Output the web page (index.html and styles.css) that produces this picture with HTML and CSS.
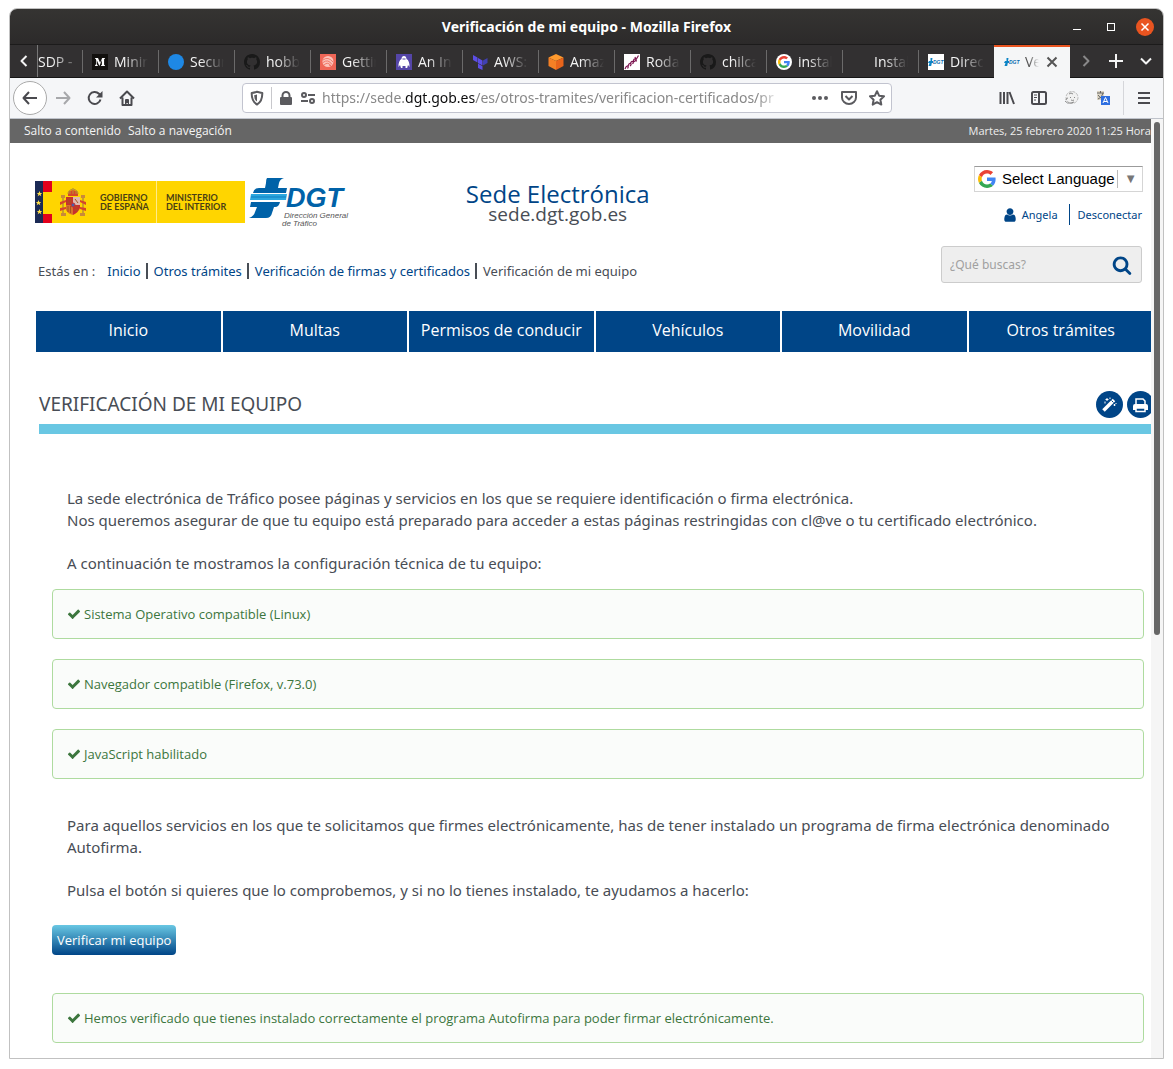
FILE: index.html
```html
<!DOCTYPE html>
<html lang="es">
<head>
<meta charset="utf-8">
<meta name="viewport" content="width=device-width, initial-scale=1">
<title>Verificación de mi equipo</title>
<link rel="stylesheet" href="styles.css">
</head>
<body>
<svg class="defs" aria-hidden="true">
  <symbol id="check" viewBox="0 0 1792 1792"><path d="M1671 566q0 40-28 68l-724 724-136 136q-28 28-68 28t-68-28l-136-136-362-362q-28-28-28-68t28-68l136-136q28-28 68-28t68 28l294 295 656-657q28-28 68-28t68 28l136 136q28 28 28 68z"/></symbol>
  <symbol id="google" viewBox="0 0 48 48"><path fill="#ea4335" d="M24 9.500c3.540 0 6.710 1.220 9.210 3.600l6.850-6.850C35.900 2.380 30.470 0 24 0 14.620 0 6.510 5.380 2.560 13.220l7.980 6.190C12.430 13.720 17.740 9.500 24 9.500z"/><path fill="#4285f4" d="M46.980 24.550c0-1.570-.15-3.090-.38-4.550H24v9.020h12.940c-.58 2.960-2.260 5.480-4.780 7.180l7.730 6c4.510-4.180 7.090-10.360 7.090-17.650z"/><path fill="#fbbc05" d="M10.530 28.590c-.48-1.450-.76-2.990-.76-4.590s.27-3.140.76-4.590l-7.980-6.190C.92 16.460 0 20.120 0 24c0 3.880.92 7.540 2.560 10.780l7.970-6.190z"/><path fill="#34a853" d="M24 48c6.480 0 11.930-2.130 15.890-5.810l-7.730-6c-2.150 1.450-4.920 2.300-8.160 2.300-6.260 0-11.570-4.220-13.470-9.910l-7.980 6.190C6.510 42.620 14.620 48 24 48z"/></symbol>
  <symbol id="github" viewBox="0 0 16 16"><path d="M8 0C3.580 0 0 3.580 0 8c0 3.540 2.290 6.530 5.470 7.590.4.070.55-.17.55-.38 0-.19-.01-.82-.01-1.490-2.010.37-2.530-.49-2.690-.94-.09-.23-.48-.94-.82-1.130-.28-.15-.68-.52-.01-.53.63-.01 1.080.58 1.230.82.72 1.210 1.870.87 2.330.66.070-.52.280-.87.510-1.070-1.780-.2-3.640-.89-3.640-3.950 0-.87.310-1.590.820-2.150-.08-.2-.36-1.020.080-2.120 0 0 .67-.21 2.200.82.640-.18 1.320-.27 2-.27s1.360.09 2 .27c1.530-1.040 2.200-.82 2.200-.82.440 1.100.160 1.920.080 2.120.510.560.820 1.270.820 2.150 0 3.070-1.870 3.750-3.650 3.950.290.250.540.730.540 1.480 0 1.070-.01 1.930-.01 2.200 0 .210.150.460.550.380A8.010 8.010 0 0 0 16 8c0-4.420-3.580-8-8-8z"/></symbol>
  <symbol id="dgt" viewBox="0 0 16 16"><path fill="#0b84c6" d="M1 7h1.500V4H4.500L4 7H5v2H3.800l-.6 3H.5L1.500 9H0z"/><text x="5" y="10" class="mini-dgt">DGT</text></symbol>
</svg>

<div class="window">
  <div class="titlebar">
    <span class="window-title">Verificación de mi equipo - Mozilla Firefox</span>
    <div class="window-buttons">
      <button type="button" aria-label="Minimizar"><svg width="18" height="18" viewBox="0 0 18 18"><path d="M5 11.500h8" stroke="#fff"/></svg></button>
      <button type="button" aria-label="Maximizar"><svg width="18" height="18" viewBox="0 0 18 18"><rect x="5.500" y="5.500" width="7" height="7" fill="none" stroke="#fff"/></svg></button>
      <button type="button" aria-label="Cerrar"><svg width="18" height="18" viewBox="0 0 18 18"><circle cx="9" cy="9" r="9" fill="#e95420"/><path d="M5.500 5.500l7 7m0-7l-7 7" stroke="#fff" stroke-width="1.500"/></svg></button>
    </div>
  </div>

  <div class="tabbar">
    <button type="button" class="scroll-left" aria-label="Pestañas anteriores"><svg width="16" height="16" viewBox="0 0 16 16"><path d="M10.500 3L5.500 8l5 5" class="line"/></svg></button>
    <div class="tabs">
      <button type="button" class="tab tab-first"><span>SDP - </span></button>
      <button type="button" class="tab"><svg viewBox="0 0 16 16"><rect width="16" height="16" fill="#12100e"/><path fill="#fff" d="M3 4h3l2.100 4.800L10.200 4H13v.6l-.9.700v5.400l.9.700v.6H9v-.6l.9-.7V6L7.400 12 4.700 6v4.300l1.100 1.100v.6H3v-.6l1-1.100V5.300L3 4.500z"/></svg><span>Mining</span></button>
      <button type="button" class="tab"><svg viewBox="0 0 16 16"><circle cx="8" cy="8" r="8" fill="#1e88e5"/></svg><span>Secure</span></button>
      <button type="button" class="tab"><svg viewBox="0 0 16 16" fill="#191919"><use href="#github"/></svg><span>hobby</span></button>
      <button type="button" class="tab"><svg viewBox="0 0 16 16"><rect width="16" height="16" fill="#ef6657"/><circle cx="8" cy="7.500" r="5.500" fill="#fbc3ba"/><path d="M3 6q5-4 10 2M3 8.500q5-4 9 2M4 11q4-4 7 1M9 11l5 3" fill="none" stroke="#ef6657" stroke-width=".8"/></svg><span>Getting</span></button>
      <button type="button" class="tab"><svg viewBox="0 0 16 16"><rect width="16" height="16" fill="#5546a8"/><path fill="#fff" d="M8 2c1.800 0 2.500 1.500 2.500 3 2 1 3.300 4 3 8l-1.500-2-.8 3H9.500V12h-3v2H5l-1-3-1.500 2c-.3-4 1-7 3-8C5.500 3.500 6.200 2 8 2z"/><path d="M6.500 5h3" stroke="#5546a8"/></svg><span>An Int</span></button>
      <button type="button" class="tab"><svg viewBox="0 0 16 16" fill="#5c4ee5"><path d="M1 1l4.500 2.600v5L1 6zM6 4l4.500 2.600v5L6 9zM6 9.600l4.500 2.600V16L6 14z"/><path d="M11 6.600L15.500 4v5L11 11.600z" fill="#4040b2"/></svg><span>AWS: a</span></button>
      <button type="button" class="tab"><svg viewBox="0 0 16 16"><path fill="#ff9a2e" d="M8 0l7.500 3.500L8 7 .5 3.500z"/><path fill="#f58025" d="M.5 3.500L8 7v9L.5 12z"/><path fill="#e8641b" d="M15.500 3.500L8 7v9l7.500-4z"/></svg><span>Amazon</span></button>
      <button type="button" class="tab"><svg viewBox="0 0 16 16"><rect width="16" height="16" fill="#fff"/><path d="M1 15q1-3 2.500-3t0 2.500M4 12q1-3 2.500-2.500t-.5 2.500M6.500 10q.5-3 2-2.500t0 2.500M9 8q1-4 2.500-3t-2 3M11.500 6.500l3-5M12.500 7.500L11 3" fill="none" stroke="#7c1450" stroke-width="1.200"/></svg><span>Rodalies</span></button>
      <button type="button" class="tab"><svg viewBox="0 0 16 16" fill="#191919"><use href="#github"/></svg><span>chilcano</span></button>
      <button type="button" class="tab"><svg viewBox="0 0 16 16"><circle cx="8" cy="8" r="8" fill="#fff"/><use href="#google" x="2" y="2" width="12" height="12"/></svg><span>install</span></button>
      <button type="button" class="tab"><svg viewBox="0 0 16 16"></svg><span>Install</span></button>
      <button type="button" class="tab"><svg viewBox="0 0 16 16"><rect width="16" height="16" fill="#fff"/><use href="#dgt"/></svg><span>Direcc</span></button>
      <button type="button" class="tab tab-active"><svg viewBox="0 0 16 16"><use href="#dgt"/></svg><span>Veri</span><svg class="tab-close" viewBox="0 0 16 16"><path d="M3.500 3.500l9 9m0-9l-9 9" class="line"/></svg></button>
    </div>
    <div class="tab-tools">
      <button type="button" class="dim" aria-label="Pestañas siguientes"><svg width="16" height="16" viewBox="0 0 16 16"><path d="M5.500 3l5 5-5 5" class="line"/></svg></button>
      <button type="button" aria-label="Nueva pestaña"><svg width="16" height="16" viewBox="0 0 16 16"><path d="M8 1v14M1 8h14" class="line"/></svg></button>
      <button type="button" aria-label="Listar pestañas"><svg width="16" height="16" viewBox="0 0 16 16"><path d="M3 5.500l5 5 5-5" class="line"/></svg></button>
    </div>
  </div>

  <div class="toolbar">
    <div class="history">
      <button type="button" class="back" aria-label="Atrás"><svg width="16" height="16" viewBox="0 0 16 16"><path d="M15 8H1.500M7 2L1.500 8 7 14" class="line"/></svg></button>
      <button type="button" class="dim" aria-label="Adelante"><svg width="16" height="16" viewBox="0 0 16 16"><path d="M1 8h13.500M9 2l5.500 6L9 14" class="line"/></svg></button>
      <button type="button" aria-label="Recargar"><svg width="16" height="16" viewBox="0 0 16 16"><path d="M13.500 9.500A6 6 0 1 1 12 3.800l1.500 1.500" class="line"/><path d="M15.500 1v6.500H9z" fill="currentColor"/></svg></button>
      <button type="button" aria-label="Inicio"><svg width="16" height="16" viewBox="0 0 16 16"><path d="M1 8.500L8 1.500l7 7M3.500 7.500V15h9V7.500" class="line"/><path d="M6 15v-5q0-1 1-1h2q1 0 1 1v5H8.800v-2H7.500v2z" fill="currentColor"/></svg></button>
    </div>
    <div class="urlbar">
      <svg width="16" height="16" viewBox="0 0 16 16"><path d="M8 1.800q3 1 5.300 1.200Q13.500 11.500 8 14.500 2.500 11.500 2.700 3 5 2.800 8 1.800z" class="line"/><path d="M8 4.500v7q-3-2-2.800-6.300z" fill="currentColor"/></svg>
      <i class="url-divider"></i>
      <svg width="16" height="16" viewBox="0 0 16 16"><path fill="currentColor" d="M3.500 7V5.500a4.500 4.500 0 0 1 9 0V7h.5q1 0 1 1v6q0 1-1 1H3q-1 0-1-1V8q0-1 1-1zm2 0h5V5.500a2.500 2.500 0 0 0-5 0z"/></svg>
      <svg width="16" height="16" viewBox="0 0 16 16"><circle cx="4" cy="5" r="2" class="line"/><circle cx="12" cy="11" r="2" class="line"/><path d="M8 5h7M1 11h7" class="line"/></svg>
      <a class="url" href="#contenido">https://sede.<b>dgt.gob.es</b>/es/otros-tramites/verificacion-certificados/pr</a>
      <div class="url-actions">
        <svg width="18" height="16" viewBox="0 0 18 16" fill="currentColor"><circle cx="3" cy="8" r="2"/><circle cx="9" cy="8" r="2"/><circle cx="15" cy="8" r="2"/></svg>
        <svg width="16" height="16" viewBox="0 0 16 16"><path d="M1 2h14v5.500a7 6.500 0 0 1-14 0zM4.500 6L8 9.500 11.500 6" class="line"/></svg>
        <svg width="16" height="16" viewBox="0 0 16 16"><path d="M8 1.200l2.100 4.500 4.900.6-3.600 3.400.9 4.900L8 12.200l-4.300 2.400.9-4.900L1 6.300l4.900-.6z" class="line"/></svg>
      </div>
    </div>
    <div class="extensions">
      <button type="button" aria-label="Biblioteca"><svg width="16" height="16" viewBox="0 0 16 16"><path d="M1.500 2v12M5 2v12M8.500 2v12M10.500 2l4.500 12" class="line"/></svg></button>
      <button type="button" aria-label="Barra lateral"><svg width="16" height="16" viewBox="0 0 16 16"><rect x="1" y="2" width="14" height="12" rx="1.500" class="line"/><path d="M8 2v12" class="line"/><path d="M3 5h3M3 7.500h3M3 10h2" stroke="currentColor"/></svg></button>
      <button type="button" aria-label="Extensión"><svg width="16" height="16" viewBox="0 0 16 16"><circle cx="9" cy="7.500" r="6" fill="#f1f1f1" stroke="#bbb" stroke-dasharray="3 1"/><path d="M2 11q2 3 6 2l3-1M3 10q0-2 2-2M6 4q2-2 4 0M7 7.500h1M11 7.500h1M8 10q2 1 3 0" fill="none" stroke="#8a8a8a"/></svg></button>
      <button type="button" aria-label="Traducir"><svg width="16" height="16" viewBox="0 0 16 16"><path fill="#ddd6c6" d="M2 1h7v9H2z"/><path d="M2 3h7M5.500 1v2M3 9q4-1 5-6M3 5q2 3 5 4" stroke="#666" fill="none"/><rect x="6" y="6" width="9" height="9" fill="#2f6fe0"/><path d="M8 13l2.500-5.500L13 13M9 11.500h3" fill="none" stroke="#fff"/></svg></button>
      <i class="menu-divider"></i>
      <button type="button" aria-label="Menú"><svg width="16" height="16" viewBox="0 0 16 16"><path d="M2 3h12M2 8h12M2 13h12" class="line"/></svg></button>
    </div>
  </div>

  <div class="viewport">
    <div class="page">
      <div class="skipbar">
        <nav><a href="#contenido">Salto a contenido</a><a href="#menu">Salto a navegación</a></nav>
        <span class="clock">Martes, 25 febrero 2020 11:25 Hora Central</span>
      </div>

      <header class="header">
        <div class="logos">
          <div class="gov">
            <svg width="17" height="42" viewBox="0 0 17 42"><path fill="#1b2a55" d="M0 0h8v42H0z"/><path fill="#ffd500" d="M8 0h9v42H8z"/><path fill="#e3001b" d="M8 0h9v11H8zM8 33h9v9H8z"/><g fill="#ffe04a"><path id="star" d="M4.500 10l.8 2h2l-1.600 1.200.6 2-1.800-1.200-1.800 1.200.6-2L1.700 12h2z"/><use href="#star" y="9" x="-1"/><use href="#star" y="18"/></g></svg>
            <svg class="arms" width="28" height="30" viewBox="0 0 28 30"><path fill="#c9a227" d="M3 11h2v16H3zM23 11h2v16h-2z"/><path fill="#c98a3a" d="M2 26h5v3H2zM21 26h5v3h-5zM2 8h4v3H2zM22 8h4v3h-4z"/><path fill="#d5452c" d="M1 15l6-2v2l-6 3zM27 15l-6-2v2l6 3zM1 21l6-1v2l-6 2zM27 21l-6-1v2l6 2zM9 7l1-3 4-1 4 1 1 3v2H9z"/><path d="M9 7q0-4 5-5 5 1 5 5M11 7V4M14 7V1M17 7V4" fill="none" stroke="#b8952e"/><path fill="#c8302d" d="M7 10h7v8H7zM14 18h7v3q-2 5-7 7z"/><path fill="#ddb8b0" d="M14 10h7v8h-7z"/><path fill="#d9702b" d="M7 18h7v10q-5-1-7-5z"/><path d="M9 12h3v4H9zM16 12l3 4M9 19v6M11.500 19v7M16 20h3M15 23h4" stroke="#a8541f" fill="none"/><circle cx="14" cy="18" r="2" fill="#4a5fa8" stroke="#c8302d"/></svg>
            <span class="gov-name">GOBIERNO<br>DE ESPAÑA</span>
            <span class="gov-name gov-ministry">MINISTERIO<br>DEL INTERIOR</span>
          </div>
          <svg class="dgt-logo" width="100" height="52" viewBox="0 0 100 52">
            <g fill="#0062a8"><path d="M18 1h17q-4 1-5 5l-1 5h9l-1 5H4q1-5 6-5h6l1-5q0-4 1-5z"/><path d="M2 25h29q-1 5-5 5h-1l-2 6q-1 5-6 5H0q5-2 6-6l2-5H1z"/></g>
            <path fill="#2ba6de" d="M2 17h36l-1 6H1z"/><path stroke="#0e7fc1" d="M2 20h35"/>
            <text x="37" y="30" class="dgt-word">DGT</text>
            <text x="35" y="41" class="dgt-sub">Dirección General</text>
            <text x="33" y="49" class="dgt-sub">de Tráfico</text>
          </svg>
        </div>
        <div class="site-name">
          <a href="#inicio">Sede Electrónica</a>
          <span>sede.dgt.gob.es</span>
        </div>
        <div class="account">
          <div class="language">
            <svg width="18" height="18"><use href="#google"/></svg>
            <select aria-label="Select Language"><option>Select Language</option></select>
            <span class="language-arrow" aria-hidden="true">▼</span>
          </div>
          <div class="user">
            <svg width="16" height="16" viewBox="128 0 1536 1792" fill="#004587"><path d="M1536 1399q0 109-62.500 187t-150.500 78h-854q-88 0-150.500-78t-62.500-187q0-85 8.500-160.500t31.500-152 58.500-131 94-89 134.500-34.500q131 128 313 128t313-128q76 0 134.500 34.500t94 89 58.500 131 31.500 152 8.500 160.500zm-256-887q0 159-112.500 271.500t-271.500 112.500-271.500-112.500-112.500-271.500 112.500-271.500 271.500-112.500 271.500 112.500 112.500 271.500z"/></svg>
            <a href="#usuario">Angela</a>
            <a class="logout" href="#salir">Desconectar</a>
          </div>
        </div>
        <nav class="breadcrumb" aria-label="Estás en">
          <span>Estás en :</span>
          <ol>
            <li><a href="#inicio">Inicio</a></li>
            <li><a href="#tramites">Otros trámites</a></li>
            <li><a href="#firmas">Verificación de firmas y certificados</a></li>
            <li>Verificación de mi equipo</li>
          </ol>
        </nav>
        <form class="search">
          <input type="text" aria-label="Buscar" placeholder="¿Qué buscas?">
          <button type="button" aria-label="Buscar"><svg width="20" height="20" viewBox="0 0 1792 1792" fill="#004587"><path d="M1216 832q0-185-131.500-316.500t-316.500-131.500-316.500 131.500-131.500 316.500 131.500 316.500 316.500 131.500 316.500-131.500 131.500-316.500zm512 832q0 52-38 90t-90 38q-54 0-90-38l-343-342q-179 124-399 124-143 0-273.500-55.500t-225-150-150-225-55.500-273.500 55.500-273.500 150-225 225-150 273.500-55.500 273.500 55.500 225 150 150 225 55.500 273.500q0 220-124 399l343 343q37 37 37 90z"/></svg></button>
        </form>
      </header>

      <nav class="mainnav" id="menu">
        <a href="#inicio">Inicio</a><a href="#multas">Multas</a><a href="#permisos">Permisos de conducir</a><a href="#vehiculos">Vehículos</a><a href="#movilidad">Movilidad</a><a href="#tramites">Otros trámites</a>
      </nav>

      <main id="contenido">
        <div class="heading">
          <h1>VERIFICACIÓN DE MI EQUIPO</h1>
          <div class="tools">
            <button type="button" aria-label="Personalizar"><svg width="27" height="27" viewBox="0 0 27 27"><path d="M7.500 19.500L18 9" stroke="#fff" stroke-width="3.600"/><path d="M15.500 9.500l2 2" stroke="#004587"/><path d="M18.500 13v2M17.500 14h2M11 7v3M9.500 8.500h3M9 10.500v2M14 6.500v1.500M20 12v1" stroke="#fff"/></svg></button>
            <button type="button" aria-label="Imprimir"><svg width="27" height="27" viewBox="0 0 27 27"><path d="M9 14V8h7l2 2v4" fill="none" stroke="#fff" stroke-width="1.500"/><path fill="#fff" d="M8 13h11q2 0 2 2v4h-3v-2H9v2H6v-4q0-2 2-2z"/><path d="M9 17h9v3.500H9z" fill="#004587" stroke="#fff" stroke-width="1.500"/></svg></button>
          </div>
        </div>
        <div class="content">
          <div class="text">
            <p>La sede electrónica de Tráfico posee páginas y servicios en los que se requiere identificación o firma electrónica.<br>Nos queremos asegurar de que tu equipo está preparado para acceder a estas páginas restringidas con cl@ve o tu certificado electrónico.</p>
            <p>A continuación te mostramos la configuración técnica de tu equipo:</p>
          </div>
          <div class="alerts">
            <div class="alert"><svg width="14" height="14"><use href="#check"/></svg><span>Sistema Operativo compatible (Linux)</span></div>
            <div class="alert"><svg width="14" height="14"><use href="#check"/></svg><span>Navegador compatible (Firefox, v.73.0)</span></div>
            <div class="alert"><svg width="14" height="14"><use href="#check"/></svg><span>JavaScript habilitado</span></div>
          </div>
          <div class="text text-signing">
            <p>Para aquellos servicios en los que te solicitamos que firmes electrónicamente, has de tener instalado un programa de firma electrónica denominado Autofirma.</p>
            <p>Pulsa el botón si quieres que lo comprobemos, y si no lo tienes instalado, te ayudamos a hacerlo:</p>
          </div>
          <button type="button" class="verify">Verificar mi equipo</button>
          <div class="alert"><svg width="14" height="14"><use href="#check"/></svg><span>Hemos verificado que tienes instalado correctamente el programa Autofirma para poder firmar electrónicamente.</span></div>
        </div>
      </main>
    </div>
    <div class="scrollbar"><i></i></div>
  </div>
</div>
</body>
</html>
```
FILE: styles.css
```css
* { box-sizing: border-box; }

body {
  margin: 0;
  padding: 8px 9px 9px;
  background: #fff;
  font-family: "Open Sans", "Noto Sans", sans-serif;
  color: #484d55;
}

a { color: #004587; text-decoration: none; }

button {
  display: flex;
  align-items: center;
  justify-content: center;
  padding: 0;
  border: 0;
  background: none;
  color: inherit;
  font: inherit;
}

svg { display: block; flex: none; }

.defs { position: absolute; width: 0; height: 0; }
.line { fill: none; stroke: currentColor; stroke-width: 2; stroke-linejoin: round; }
.mini-dgt { font: italic bold 5px "Liberation Sans", sans-serif; fill: #0b6cb0; }

/* Browser window */

.window {
  overflow: hidden;
  border: 1px solid #c1c1c1;
  border-radius: 8px 8px 0 0;
}

.titlebar {
  display: grid;
  grid-template-columns: 1fr auto 1fr;
  align-items: center;
  height: 36px;
  border-bottom: 1px solid #1c1b1b;
  background: linear-gradient(#353432, #2c2a2a);
  color: #fff;
  font: bold 14px/20px "Noto Sans", sans-serif;
}

.window-title { grid-column: 2; }

.window-buttons {
  display: flex;
  justify-content: flex-end;
  gap: 16px;
  padding-right: 9px;
}

.tabbar {
  display: flex;
  height: 33px;
  border-bottom: 1px solid #161616;
  background: #323031;
  color: #f4f4f4;
  font: 14px/20px "Open Sans", sans-serif;
}

.scroll-left { width: 28px; border-right: 1px solid #777; }

.tabs { display: flex; flex: 1; min-width: 0; }

.tab {
  position: relative;
  flex: 1;
  justify-content: flex-start;
  gap: 6px;
  min-width: 0;
  padding: 2px 10px 0;
}

.tab svg { width: 16px; height: 16px; }

.tab::before {
  content: "";
  position: absolute;
  left: 0;
  top: 5px;
  bottom: 4px;
  width: 1px;
  background: #6b6a6a;
}

.tab span {
  flex: 1;
  overflow: hidden;
  text-align: left;
  white-space: nowrap;
  -webkit-mask-image: linear-gradient(90deg, #000 30%, transparent);
  mask-image: linear-gradient(90deg, #000 30%, transparent);
}

.tab-first { flex: 0 0 44px; padding: 2px 0 0; }
.tab-first::before { display: none; }

.tab-active {
  gap: 5px;
  height: 33px;
  padding: 0 10px 2px;
  border-top: 2px solid #e95420;
  background: #f5f6f7;
  color: #555;
}

.tab-active::before { display: none; }

.tab-tools { display: flex; padding: 0 9px 0 8px; gap: 14px; }

.dim { opacity: .45; }

.toolbar {
  display: flex;
  align-items: center;
  height: 41px;
  border-bottom: 1px solid #bfc3cb;
  background: #f5f6f8;
  color: #4a4a4f;
}

.history { display: flex; flex: 0 0 232px; gap: 16px; padding-left: 3px; }

.back {
  width: 34px;
  height: 34px;
  margin-right: -8px;
  border: 1px solid #aaa;
  border-radius: 50%;
  background: #fff;
}

.urlbar {
  display: flex;
  flex: 0 1 650px;
  align-items: center;
  gap: 6px;
  min-width: 0;
  height: 30px;
  padding: 0 6px;
  border: 1px solid #c2c4cf;
  border-radius: 4px;
  background: #fff;
  color: #5b5b5f;
}

.url-divider { width: 1px; height: 22px; background: #c8c8cc; }

.url {
  flex: 1;
  overflow: hidden;
  color: #888;
  font: 14px/22px "Noto Sans", sans-serif;
  white-space: nowrap;
  -webkit-mask-image: linear-gradient(90deg, #000 90%, transparent 95%);
  mask-image: linear-gradient(90deg, #000 90%, transparent 95%);
}

.url b { color: #0c0c0d; font-weight: 400; }

.url-actions { display: flex; gap: 12px; }

.extensions {
  display: flex;
  flex: 1 0 auto;
  justify-content: flex-end;
  align-items: center;
  gap: 16px;
  padding-right: 11px;
}

.menu-divider { width: 1px; height: 34px; margin: 0 -4px; background: #d5d6da; }

/* Web page */

.viewport { display: flex; }

.page { flex: 1; min-width: 0; overflow: hidden; padding-bottom: 15px; }

.scrollbar {
  display: grid;
  grid-template-rows: 55fr 45fr;
  width: 12px;
  padding: 3px;
  background: #f5f5f5;
}

.scrollbar i { border-radius: 3px; background: #666; }

.skipbar {
  display: flex;
  justify-content: space-between;
  height: 24px;
  margin-right: -40px;
  padding-left: 14px;
  background: #666;
  color: #eee;
  font-size: 11px;
  line-height: 23px;
}

.skipbar nav { display: flex; gap: 7px; font-size: 12px; }
.skipbar a { color: #f4f4f4; }
.clock { white-space: nowrap; }

.header {
  display: grid;
  grid-template-columns: minmax(0, 7fr) auto minmax(0, 8fr);
  grid-template-rows: 103px auto;
  padding: 0 9px 15px 25px;
}

.logos { display: flex; align-items: flex-start; gap: 4px; padding-top: 34px; }

.gov {
  display: flex;
  flex: none;
  align-items: center;
  width: 210px;
  height: 42px;
  margin-top: 4px;
  background: #ffd500;
}

.arms { margin: 0 13px 0 7px; }

.gov-name {
  color: #4a3f14;
  font: bold 9px/9px Lato, sans-serif;
  white-space: nowrap;
}

.gov-ministry {
  margin-left: 7px;
  padding: 12px 0 12px 9px;
  border-left: 1px solid #ffeb8a;
}

.dgt-logo { flex: none; }
.dgt-word { fill: #0062a8; font: italic bold 27px "Liberation Sans", sans-serif; }
.dgt-sub { fill: #555; font: italic 8px "Liberation Sans", sans-serif; }

.site-name {
  display: flex;
  flex-direction: column;
  align-items: center;
  padding-top: 39px;
  font: 19px/18px "Open Sans", sans-serif;
}

.site-name a { font-size: 24px; line-height: 23px; }

.account {
  display: flex;
  flex-direction: column;
  align-items: flex-end;
  gap: 12px;
  padding-top: 23px;
}

.language {
  display: flex;
  align-items: center;
  width: 169px;
  height: 26px;
  margin-right: -1px;
  padding: 0 3px;
  border: 1px solid #d5d5d5;
  border-top-color: #9b9b9b;
}

.language select {
  appearance: none;
  flex: 1;
  min-width: 0;
  padding: 0 0 0 6px;
  border: 0;
  background: none;
  color: #000;
  font: 15px/18px "Liberation Sans", sans-serif;
}

.language-arrow {
  padding: 0 2px 0 6px;
  border-left: 1px solid #bbb;
  color: #777;
  font: 13px/18px "Liberation Sans", "DejaVu Sans", sans-serif;
}

.user { display: flex; align-items: center; font: 11px/21px "Noto Sans", sans-serif; }
.user svg { margin-right: 4px; }
.logout { margin-left: 11px; padding-left: 8px; border-left: 1px solid #004587; }

.breadcrumb {
  display: flex;
  grid-column: 1 / 3;
  gap: 12px;
  align-items: center;
  height: 50px;
  padding-left: 3px;
  font: 13px/16px "Noto Sans", sans-serif;
  white-space: nowrap;
}

.breadcrumb ol { display: flex; margin: 0; padding: 0; list-style: none; }
.breadcrumb li + li { margin-left: 5px; padding-left: 6px; border-left: 2px solid #484d55; }

.search {
  display: flex;
  justify-self: end;
  width: 201px;
  height: 37px;
  padding: 0 9px 0 8px;
  border: 1px solid #ccc;
  border-radius: 3px;
  background: #eee;
}

.search input {
  flex: 1;
  min-width: 0;
  padding: 0;
  border: 0;
  background: none;
  font: 12px/18px "Noto Sans", sans-serif;
}

.search input::placeholder { color: #a0a0a0; }

.mainnav {
  display: grid;
  grid-template-columns: repeat(6, 1fr);
  margin: 0 -4px 0 26px;
  background: #004587;
}

.mainnav a {
  height: 41px;
  border-right: 2px solid #fff;
  color: #fff;
  font-size: 16px;
  line-height: 38px;
  text-align: center;
}

.heading {
  display: flex;
  align-items: center;
  justify-content: space-between;
  margin: 38px -3px 0 29px;
  padding-bottom: 5px;
  border-bottom: 10px solid #69c7e3;
}

h1 { margin: 0; font: 19px/29px "Noto Sans", sans-serif; }

.tools { display: flex; gap: 4px; }
.tools button { border-radius: 50%; background: #004587; }

.content { padding: 53px 7px 0 42px; }

.text { padding: 0 15px; font: 15px/22px "Noto Sans", sans-serif; }
.text p { margin: 0 0 21px; }
.text p:last-child { margin-bottom: 15px; }

.alerts { display: grid; gap: 20px; }

.alert {
  display: flex;
  align-items: center;
  gap: 3px;
  min-height: 50px;
  padding: 0 14px;
  border: 1px solid #aedb9f;
  border-radius: 4px;
  background: #fafcfa;
  color: #3c763d;
  fill: #3c763d;
  font-size: 13px;
  line-height: 18px;
}

.text-signing { margin-top: 35px; }

.verify {
  height: 30px;
  margin: 24px 0 38px;
  padding: 0 5px;
  border-radius: 4px;
  background: linear-gradient(#69c7e3, #004587);
  color: #fff;
  font-size: 13px;
}
```
